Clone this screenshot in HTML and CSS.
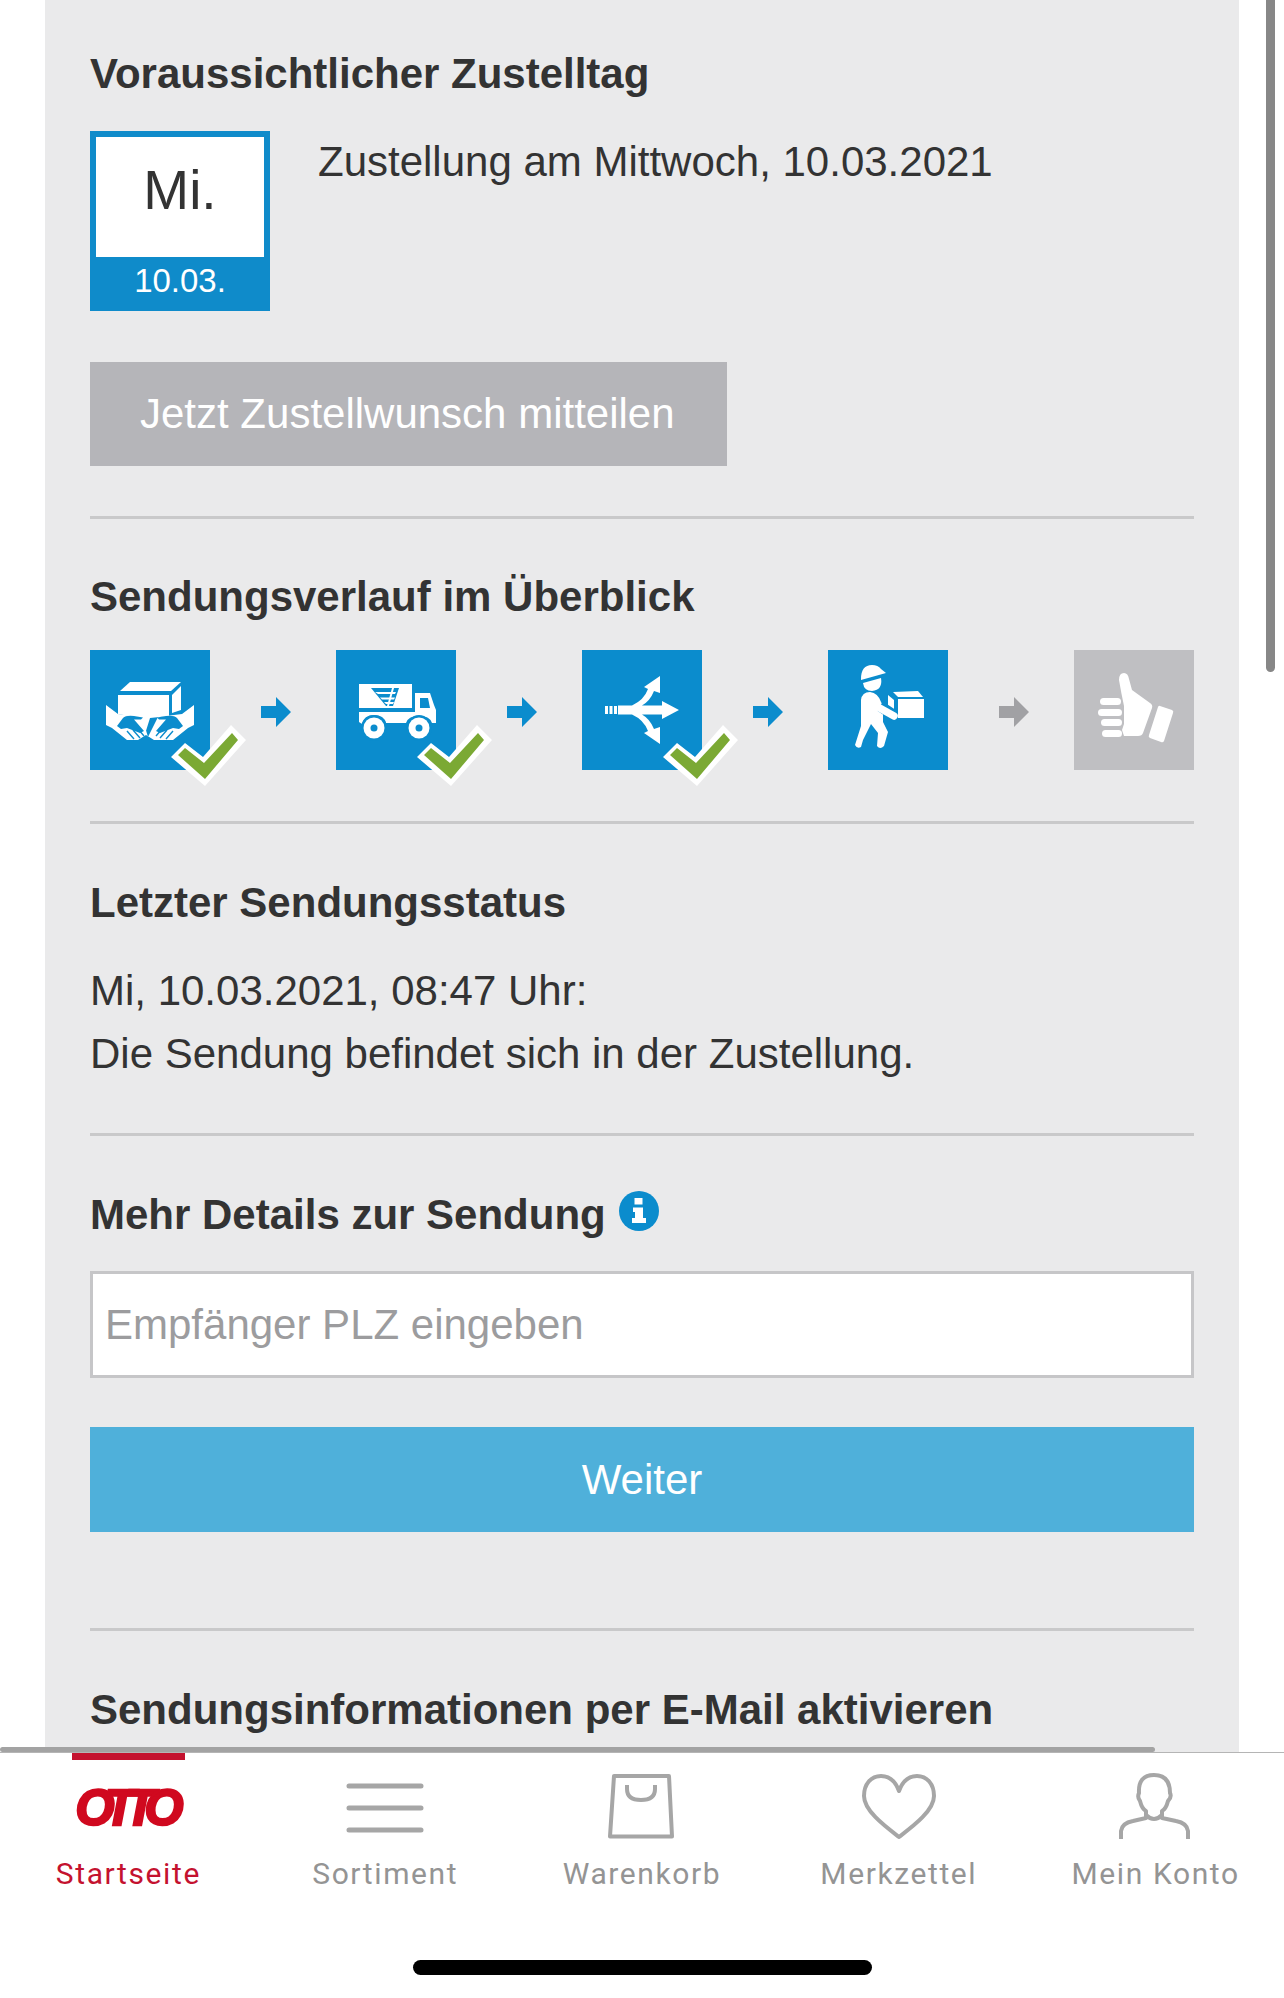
FILE: index.html
```html
<!DOCTYPE html>
<html lang="de">
<head>
<meta charset="utf-8">
<title>Sendungsverfolgung</title>
<link rel="stylesheet" href="styles.css">
</head>
<body>
<div class="screen">
  <main class="viewport">
    <section class="panel">
      <h2 class="heading">Voraussichtlicher Zustelltag</h2>
      <div class="date-row">
        <div class="date-box">
          <div class="date-day">Mi.</div>
          <div class="date-num">10.03.</div>
        </div>
        <p class="date-text">Zustellung am Mittwoch, 10.03.2021</p>
      </div>
      <button class="btn btn-grey" type="button">Jetzt Zustellwunsch mitteilen</button>
      <hr class="rule rule-a">

      <h2 class="heading heading-b">Sendungsverlauf im Überblick</h2>
      <div class="steps">
        <div class="step">
          <svg class="step-icon" viewBox="0 0 120 120">
            <rect width="120" height="120" fill="#0b8ccd"/>
            <g fill="#fff">
              <path d="M30 41 40 32H91L81 41Z"/>
              <path d="M82 45 91 36V60L82 63Z"/>
              <path d="M28 45H79V66L60 68 55 84 50 68 28 64Z"/>
              <path d="M16 55 28 64 52 67 58 87 68 67 92 64 104 55V75L98 78 83 90H64L56 85 48 90H37L22 78 16 75Z"/>
            </g>
            <g fill="#0b8ccd">
              <path d="M27 76 33 68Q36 65 44 66L53 67.500 51 69.500H44L54 81 50 83 37 78 31 79Z"/>
              <path d="M93 76 87 68Q84 65 76 66L67 67.500 69 69.500H76L66 81 70 83 83 78 89 79Z"/>
            </g>
            <g stroke="#0b8ccd" stroke-width="1.400" fill="none">
              <path d="M37 81 44 89M43 80 50 88M48 79 54 86"/>
              <path d="M83 81 76 89M77 80 70 88M72 79 66 86"/>
            </g>
          </svg>
          <svg class="step-check" viewBox="0 0 80 70"><path d="M1 37 15 23 33 37 61 5 76 20 35 66Z" fill="#fff"/><path d="M8 35 15 28 34 43 62 13 68 20 35 59Z" fill="#7ba934"/></svg>
        </div>
        <div class="arrow-slot"><svg class="arrow" viewBox="0 0 30 30"><path d="M0 9H15V0L30 15 15 30V21H0Z" fill="#0b8ccd"/></svg></div>
        <div class="step">
          <svg class="step-icon" viewBox="0 0 120 120">
            <rect width="120" height="120" fill="#0b8ccd"/>
            <rect x="23" y="34" width="53" height="24" fill="#fff"/>
            <path d="M35 38H63L57 56H50Z" fill="#0b8ccd"/>
            <path d="M39 42H60L59 44H42ZM44 47.500H59L58 49.500H46ZM48 52H58L57 54H50Z" fill="#fff"/>
            <path d="M56 38H58L53 56H51Z" fill="#fff"/>
            <path d="M23 62H79V43H94L98 55 100 60V73H96Q94 66 83 66 72 66 70 73H50Q48 65 38 65 28 65 26 74L23 72Z" fill="#fff"/>
            <path d="M84 48H92L94 58H84Z" fill="#0b8ccd"/>
            <circle cx="38" cy="78" r="13" fill="#0b8ccd"/><circle cx="38" cy="78" r="10.500" fill="#fff"/><circle cx="38" cy="78" r="3.500" fill="#0b8ccd"/>
            <circle cx="83" cy="78" r="13" fill="#0b8ccd"/><circle cx="83" cy="78" r="10.500" fill="#fff"/><circle cx="83" cy="78" r="3.500" fill="#0b8ccd"/>
          </svg>
          <svg class="step-check" viewBox="0 0 80 70"><path d="M1 37 15 23 33 37 61 5 76 20 35 66Z" fill="#fff"/><path d="M8 35 15 28 34 43 62 13 68 20 35 59Z" fill="#7ba934"/></svg>
        </div>
        <div class="arrow-slot"><svg class="arrow" viewBox="0 0 30 30"><path d="M0 9H15V0L30 15 15 30V21H0Z" fill="#0b8ccd"/></svg></div>
        <div class="step">
          <svg class="step-icon" viewBox="0 0 120 120">
            <rect width="120" height="120" fill="#0b8ccd"/>
            <g fill="#fff">
              <rect x="23" y="56" width="3" height="8"/><rect x="27.500" y="56" width="3" height="8"/><rect x="32" y="56" width="3" height="8"/>
              <path d="M97 60 80 51V55.500H60Q68 51 72 41L78 43 78 26 62 37 66 39Q62 50 50 55.500H36V64.500H50Q62 70 66 81L62 83 78 94 78 77 72 79Q68 69 60 64.500H80V69Z"/>
            </g>
          </svg>
          <svg class="step-check" viewBox="0 0 80 70"><path d="M1 37 15 23 33 37 61 5 76 20 35 66Z" fill="#fff"/><path d="M8 35 15 28 34 43 62 13 68 20 35 59Z" fill="#7ba934"/></svg>
        </div>
        <div class="arrow-slot"><svg class="arrow" viewBox="0 0 30 30"><path d="M0 9H15V0L30 15 15 30V21H0Z" fill="#0b8ccd"/></svg></div>
        <div class="step">
          <svg class="step-icon" viewBox="0 0 120 120">
            <rect width="120" height="120" fill="#0b8ccd"/>
            <g fill="#fff">
              <path d="M33 29Q33 15 44 15 50 15 53 19L58 23 33 30Z"/>
              <path d="M35 33 53 28Q55 40 44 41 36 41 35 33Z"/>
              <path d="M33 50Q34 42 42 42 50 43 53 52L55 56V72L60 82 56 96Q52 100 49 96L50 83 43 74 35 90 33 97Q29 99 27 95L33 76Z"/>
              <path d="M65 42 90 41 95 47H70Z"/>
              <rect x="70" y="49" width="26" height="19"/>
              <path d="M60 45 66 50V62L60 58Z"/>
            </g>
            <path d="M52 56 67 66" stroke="#0b8ccd" stroke-width="11" fill="none"/>
            <path d="M48 56 66 66" stroke="#fff" stroke-width="7.500" stroke-linecap="round" fill="none"/>
          </svg>
        </div>
        <div class="arrow-slot"><svg class="arrow" viewBox="0 0 30 30"><path d="M0 9H15V0L30 15 15 30V21H0Z" fill="#a1a1a4"/></svg></div>
        <div class="step">
          <svg class="step-icon" viewBox="0 0 120 120">
            <rect width="120" height="120" fill="#bfbfc2"/>
            <g fill="#fff">
              <path d="M45 30Q45 23 50 23 54 23 55 29L58 40 76 53Q79 55 78 58L69 83Q68 86 64 86H50L48 80 50 74 50 56Q47 42 45 30Z"/>
              <rect x="26" y="48" width="21" height="7" rx="3.500"/>
              <rect x="24" y="59" width="24" height="7" rx="3.500"/>
              <rect x="27" y="69" width="21" height="7" rx="3.500"/>
              <rect x="28" y="80" width="20" height="7" rx="3.500"/>
              <path d="M86 56 98 60Q100 61 99 63L90 91Q89 93 87 92L76 88Q74 87 75 85L84 57Q85 55 86 56Z"/>
            </g>
          </svg>
        </div>
      </div>
      <hr class="rule rule-b">

      <h2 class="heading heading-c">Letzter Sendungsstatus</h2>
      <p class="status">Mi, 10.03.2021, 08:47 Uhr:<br>Die Sendung befindet sich in der Zustellung.</p>
      <hr class="rule rule-c">

      <div class="details-head">
        <h2 class="heading">Mehr Details zur Sendung</h2>
        <svg class="info" viewBox="0 0 40 40">
          <circle cx="20" cy="20" r="20" fill="#0b8ccd"/>
          <rect x="15.500" y="7" width="8" height="6.500" fill="#fff"/>
          <path d="M14 16.500H24V27H27V32H13V27H16V21H14Z" fill="#fff"/>
        </svg>
      </div>
      <input class="plz" type="text" placeholder="Empfänger PLZ eingeben">
      <button class="btn btn-blue" type="button">Weiter</button>
      <hr class="rule rule-d">

      <h2 class="heading heading-c">Sendungsinformationen per E-Mail aktivieren</h2>
    </section>
    <div class="scroll-v"></div>
    <div class="scroll-h"></div>
  </main>

  <nav class="tabbar">
    <a class="tab tab-active">
      <span class="tab-mark"></span>
      <span class="tab-icon"><span class="otto">OTTO</span></span>
      <span class="tab-label">Startseite</span>
    </a>
    <a class="tab">
      <span class="tab-icon">
        <svg viewBox="0 0 80 66" width="80" height="66"><path d="M4 13H76M4 35H76M4 57H76" stroke="#a6a6a6" stroke-width="5" stroke-linecap="round" fill="none"/></svg>
      </span>
      <span class="tab-label">Sortiment</span>
    </a>
    <a class="tab">
      <span class="tab-icon">
        <svg viewBox="0 0 80 66" width="80" height="66"><path d="M12 3H67L70 63.500H8Z" stroke="#a6a6a6" stroke-width="4" stroke-linejoin="round" fill="none"/><path d="M25 12V16Q25 27 39 27 53 27 53 16V12" stroke="#a6a6a6" stroke-width="4" fill="none"/></svg>
      </span>
      <span class="tab-label">Warenkorb</span>
    </a>
    <a class="tab">
      <span class="tab-icon">
        <svg viewBox="0 0 80 66" width="80" height="66"><path d="M40 18C36 7 29 3 22 3 12 3 5 11 5 23 5 38 27 54 40 64 53 54 75 38 75 23 75 11 68 3 58 3 51 3 44 7 40 18Z" stroke="#a6a6a6" stroke-width="4" stroke-linejoin="round" fill="none"/></svg>
      </span>
      <span class="tab-label">Merkzettel</span>
    </a>
    <a class="tab">
      <span class="tab-icon">
        <svg viewBox="0 0 80 66" width="80" height="66"><path d="M5 66V58Q6 50 17 48L30 45V38Q26 36 24 28 21 24 23 20 22 2 38 2 54 2 54 20 56 24 52 28 50 36 46 38V45L60 48Q71 50 72 58V66M30 42Q38 50 46 42" stroke="#a6a6a6" stroke-width="4" stroke-linejoin="round" fill="none"/></svg>
      </span>
      <span class="tab-label">Mein Konto</span>
    </a>
  </nav>
  <div class="home-row"><div class="home-indicator"></div></div>
</div>
</body>
</html>
```

FILE: styles.css
```css
* { box-sizing: border-box; }
html, body { margin: 0; padding: 0; background: #fff; }
body { font-family: "Liberation Sans", Arial, sans-serif; color: #333; }

.screen { width: 1284px; height: 1998px; overflow: hidden; display: flex; flex-direction: column; background: #fff; }
.viewport { position: relative; height: 1753px; flex: none; overflow: hidden; padding: 0 45px; border-bottom: 1px solid #b5b5b5; }
.panel { background: #eaeaeb; height: 100%; padding: 51px 45px 0; }

.heading { margin: 0; font-size: 42px; line-height: 46px; font-weight: 700; color: #333; }
.heading-b { margin-top: 55px; }
.heading-c { margin-top: 56px; }

.date-row { display: flex; margin-top: 34px; }
.date-box { width: 180px; height: 180px; flex: none; background: #0f8bca; padding: 6px; display: flex; flex-direction: column; }
.date-day { background: #fff; height: 120px; font-size: 55px; line-height: 106px; text-align: center; color: #333; }
.date-num { flex: 1; font-size: 33px; line-height: 48px; text-align: center; color: #fff; }
.date-text { margin: 0 0 0 48px; font-size: 42px; line-height: 62px; color: #333; }

.btn { display: block; border: 0; padding: 0; font-family: inherit; color: #fff; font-size: 42px; }
.btn-grey { width: 637px; height: 104px; margin-top: 51px; padding-left: 50px; text-align: left; background: #b5b5b9; }
.btn-blue { width: 100%; height: 105px; margin-top: 49px; background: #4fb0da; }

.rule { border: 0; margin: 0; height: 3px; background: #c9c9ca; }
.rule-a { margin-top: 50px; }
.rule-b { margin-top: 51px; }
.rule-c { margin-top: 48px; }
.rule-d { margin-top: 96px; }

.steps { display: flex; margin-top: 30px; }
.step { position: relative; width: 120px; height: 120px; flex: none; }
.step-icon { display: block; width: 120px; height: 120px; }
.step-check { position: absolute; left: 80px; top: 70px; width: 80px; height: 70px; }
.arrow-slot { flex: 1; display: flex; align-items: center; justify-content: center; padding-left: 6px; padding-top: 3px; }
.arrow { display: block; width: 30px; height: 30px; }

.status { margin: 33px 0 0; font-size: 42px; line-height: 63px; color: #333; }

.details-head { display: flex; align-items: flex-start; gap: 13px; margin-top: 56px; }
.info { display: block; width: 40px; height: 40px; flex: none; margin-top: -1px; }

.plz { display: block; width: 100%; height: 107px; margin-top: 33px; padding: 0 12px; border: 3px solid #c6c6c8; background: #fff; font-family: inherit; font-size: 42px; color: #333; border-radius: 0; outline: 0; }
.plz::placeholder { color: #9c9c9e; opacity: 1; }

.scroll-v { position: absolute; left: 1266px; top: 0; width: 9px; height: 672px; border-radius: 0 0 5px 5px; background: #878787; }
.scroll-h { position: absolute; left: 0; top: 1747px; width: 1155px; height: 5px; border-radius: 3px; background: #a3a3a3; }

.tabbar { display: flex; flex: none; height: 203px; }
.tab { position: relative; flex: 1; display: flex; flex-direction: column; align-items: center; padding-top: 20px; color: #949494; }
.tab-active { color: #c4122f; }
.tab-mark { position: absolute; left: 72px; top: 0; width: 113px; height: 7px; background: #c4122f; }
.tab-icon { display: flex; align-items: center; justify-content: center; width: 110px; height: 66px; }
.tab-icon svg { display: block; }
.otto { font-size: 50px; line-height: 50px; font-weight: 700; font-style: italic; letter-spacing: -10px; color: #d0091f; -webkit-text-stroke: 2.500px #d0091f; padding: 3px 8px 0 0; }
.tab-label { margin-top: 18px; font-family: Roboto, sans-serif; font-size: 30px; line-height: 34px; letter-spacing: 1.600px; white-space: nowrap; }

.home-row { flex: none; display: flex; justify-content: center; }
.home-indicator { width: 459px; height: 15px; border-radius: 8px; background: #000; margin-top: 4px; margin-left: 1px; }
```
